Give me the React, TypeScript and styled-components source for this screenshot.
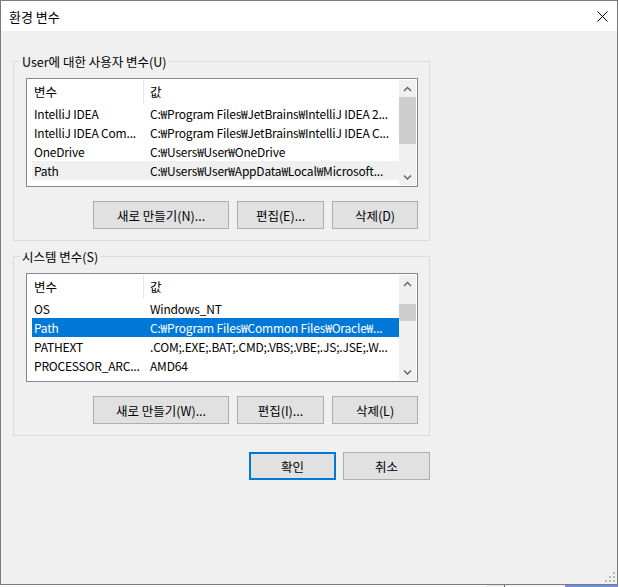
import React from "react";
import styled, { createGlobalStyle } from "styled-components";

interface VarItf {
  name: string;
  value: string;
}

// texts as the list view shows them, already cut to the column width
const userVars: VarItf[] = [
  { name: "IntelliJ IDEA", value: "C:₩Program Files₩JetBrains₩IntelliJ IDEA 2..." },
  { name: "IntelliJ IDEA Com...", value: "C:₩Program Files₩JetBrains₩IntelliJ IDEA C..." },
  { name: "OneDrive", value: "C:₩Users₩User₩OneDrive" },
  { name: "Path", value: "C:₩Users₩User₩AppData₩Local₩Microsoft..." },
  { name: "TEMP", value: "C:₩Users₩User₩AppData₩Local₩Temp" },
];

const systemVars: VarItf[] = [
  { name: "OS", value: "Windows_NT" },
  { name: "Path", value: "C:₩Program Files₩Common Files₩Oracle₩..." },
  { name: "PATHEXT", value: ".COM;.EXE;.BAT;.CMD;.VBS;.VBE;.JS;.JSE;.W..." },
  { name: "PROCESSOR_ARC...", value: "AMD64" },
  { name: "PROCESSOR_IDE...", value: "Intel64 Family 6 Model 158 Stepping 10, Ge..." },
];

const FONT = `"Noto Sans CJK KR", "Noto Sans", sans-serif`;

const Chevron = ({ down }: { down?: boolean }) => (
  <svg width="9" height="6" viewBox="0 0 9 6">
    <polyline
      points={down ? "1,1.5 4.5,5 8,1.5" : "1,5 4.5,1.5 8,5"}
      fill="none"
      stroke="#606060"
      strokeWidth="1.4"
    />
  </svg>
);

interface ListPropsItf {
  rows: VarItf[];
  selected: number;
  focused: boolean;
  thumbTop: number;
  thumbHeight: number;
}

const VarList = (props: ListPropsItf) => {
  const { rows, selected, focused, thumbTop, thumbHeight } = props;
  return (
    <ListBox>
      <Table>
        <HeaderRow>
          <HeaderCell $first>변수</HeaderCell>
          <HeaderCell>값</HeaderCell>
        </HeaderRow>
        {rows.map((r, i) => (
          <Row key={r.name} $state={i === selected ? (focused ? "active" : "inactive") : "none"}>
            <NameCell>{r.name}</NameCell>
            <ValueCell>{r.value}</ValueCell>
          </Row>
        ))}
      </Table>
      <ScrollBar>
        <ArrowBtn>
          <Chevron />
        </ArrowBtn>
        <Track>
          <Thumb style={{ marginTop: thumbTop, height: thumbHeight }} />
        </Track>
        <ArrowBtn>
          <Chevron down />
        </ArrowBtn>
      </ScrollBar>
    </ListBox>
  );
};

const App = () => {
  return (
    <>
      <GlobalStyle />
      <Window>
        <TitleBar>
          <span>환경 변수</span>
          <svg width="11" height="11" viewBox="0 0 11 11">
            <path d="M0.5 0.5 L10.5 10.5 M10.5 0.5 L0.5 10.5" stroke="#000" strokeWidth="1" />
          </svg>
        </TitleBar>
        <Body>
          <Group $top={22}>
            <Legend>User에 대한 사용자 변수(U)</Legend>
            <GroupBody>
              <VarList rows={userVars} selected={3} focused={false} thumbTop={0} thumbHeight={47} />
              <ButtonRow>
                <Button $w={136}>새로 만들기(N)...</Button>
                <Button $w={87}>편집(E)...</Button>
                <Button $w={86}>삭제(D)</Button>
              </ButtonRow>
            </GroupBody>
          </Group>
          <Group $top={7}>
            <Legend>시스템 변수(S)</Legend>
            <GroupBody>
              <VarList rows={systemVars} selected={1} focused={true} thumbTop={12} thumbHeight={17} />
              <ButtonRow>
                <Button $w={136}>새로 만들기(W)...</Button>
                <Button $w={87}>편집(I)...</Button>
                <Button $w={86}>삭제(L)</Button>
              </ButtonRow>
            </GroupBody>
          </Group>
          <DialogButtons>
            <Button $w={87} $primary>
              확인
            </Button>
            <Button $w={87}>취소</Button>
          </DialogButtons>
        </Body>
        <Grip width="10" height="10" viewBox="0 0 10 10">
          <rect x="8" y="0" width="2" height="2" fill="#b8b8b8" />
          <rect x="4" y="4" width="2" height="2" fill="#b8b8b8" />
          <rect x="8" y="4" width="2" height="2" fill="#b8b8b8" />
          <rect x="0" y="8" width="2" height="2" fill="#b8b8b8" />
          <rect x="4" y="8" width="2" height="2" fill="#b8b8b8" />
          <rect x="8" y="8" width="2" height="2" fill="#b8b8b8" />
        </Grip>
      </Window>
      <Desktop>
        <DeskPart $w={486} $bg="#ffffff" />
        <DeskPart $w={18} $bg="#ededed" />
        <DeskPart $w={1} $bg="#6b6b6b" />
        <DeskPart $w={60} $bg="#f7f7f7" />
        <DeskPart $w={53} $bg="#6f8fd8" />
      </Desktop>
    </>
  );
};

export default App;

const GlobalStyle = createGlobalStyle`
  html, body {
    margin: 0;
    padding: 0;
    background: #ffffff;
  }
  body {
    font-family: ${FONT};
    font-size: 12.5px;
    color: #000000;
  }
`;

const Window = styled.div`
  position: relative;
  width: 618px;
  height: 585px;
  box-sizing: border-box;
  border: 1px solid #7a7a7a;
  background: #f0f0f0;
  display: flex;
  flex-direction: column;
`;

const TitleBar = styled.div`
  height: 30px;
  flex-shrink: 0;
  background: #ffffff;
  display: flex;
  align-items: center;
  justify-content: space-between;
  padding: 0 9px 0 8px;
  font-size: 13px;
`;

const Body = styled.div`
  padding-left: 12px;
  display: flex;
  flex-direction: column;
`;

const Group = styled.fieldset<{ $top: number }>`
  width: 417px;
  box-sizing: border-box;
  margin: ${({ $top }) => $top}px 0 0 0;
  padding: 0;
  min-width: 0;
  border: 1px solid #dcdcdc;
`;

const Legend = styled.legend`
  margin-left: 6px;
  padding: 0 2px;
  line-height: 17px;
  font-size: 12.5px;
`;

const GroupBody = styled.div`
  padding: 8px 11px 11px 12px;
  display: flex;
  flex-direction: column;
  gap: 14px;
`;

const ListBox = styled.div`
  height: 109px;
  box-sizing: border-box;
  border: 1px solid #828790;
  padding: 1px;
  background: #ffffff;
  display: flex;
  overflow: hidden;
`;

const Table = styled.div`
  flex: 1;
  min-width: 0;
  overflow: hidden;
`;

const HeaderRow = styled.div`
  display: flex;
  height: 24px;
`;

const HeaderCell = styled.div<{ $first?: boolean }>`
  box-sizing: border-box;
  width: ${({ $first }) => ($first ? "116px" : "auto")};
  flex: ${({ $first }) => ($first ? "none" : "1")};
  padding-left: 6px;
  line-height: 23px;
  border-right: ${({ $first }) => ($first ? "1px solid #e5e5e5" : "none")};
`;

const Row = styled.div<{ $state: "none" | "active" | "inactive" }>`
  display: grid;
  grid-template-columns: 111px 1fr;
  height: 19px;
  line-height: 19px;
  margin-left: 4px;
  font-size: 12px;
  letter-spacing: -0.2px;
  background: ${({ $state }) =>
    $state === "active" ? "#0078d7" : $state === "inactive" ? "#f0f0f0" : "transparent"};
  color: ${({ $state }) => ($state === "active" ? "#ffffff" : "#000000")};
`;

const NameCell = styled.div`
  padding: 0 2px 0 2px;
  white-space: nowrap;
  overflow: hidden;
`;

const ValueCell = styled.div`
  padding: 0 0 0 7px;
  white-space: nowrap;
  overflow: hidden;
`;

const ScrollBar = styled.div`
  width: 17px;
  flex-shrink: 0;
  background: #f0f0f0;
  display: flex;
  flex-direction: column;
`;

const ArrowBtn = styled.div`
  height: 17px;
  display: flex;
  align-items: center;
  justify-content: center;
`;

const Track = styled.div`
  flex: 1;
`;

const Thumb = styled.div`
  background: #cdcdcd;
`;

const ButtonRow = styled.div`
  display: flex;
  justify-content: flex-end;
  gap: 8px;
`;

const Button = styled.button<{ $w: number; $primary?: boolean }>`
  width: ${({ $w }) => $w}px;
  height: 28px;
  box-sizing: border-box;
  margin: 0;
  padding: 0;
  background: #e1e1e1;
  border: ${({ $primary }) => ($primary ? "2px solid #0078d7" : "1px solid #adadad")};
  font-family: ${FONT};
  font-size: 12.5px;
  color: #000000;
`;

const DialogButtons = styled.div`
  width: 417px;
  margin-top: 16px;
  display: flex;
  justify-content: flex-end;
  gap: 7px;
`;

const Grip = styled.svg`
  position: absolute;
  right: 2px;
  bottom: 2px;
`;

const Desktop = styled.div`
  display: flex;
  height: 2px;
`;

const DeskPart = styled.div<{ $w: number; $bg: string }>`
  width: ${({ $w }) => $w}px;
  background: ${({ $bg }) => $bg};
`;
